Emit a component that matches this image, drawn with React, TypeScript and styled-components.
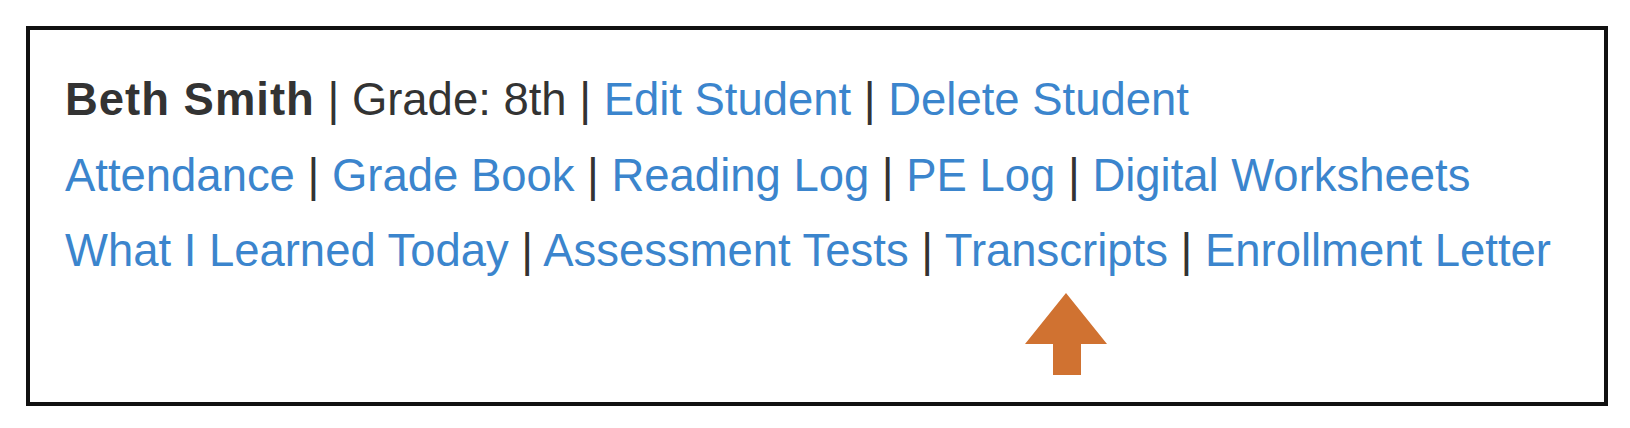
import styled, { createGlobalStyle } from 'styled-components';

const GlobalStyle = createGlobalStyle`
    html, body {
        margin: 0;
        padding: 0;
        background: #ffffff;
    }
`;

const Page = styled.div`
    padding: 26px 22px 22px 26px;
`;

const StudentCard = styled.section`
    position: relative;
    box-sizing: border-box;
    width: 1582px;
    height: 380px;
    border: 4px solid #111111;
    padding: 32px 35px 0 35px;
    font-family: "Liberation Sans", Arial, Helvetica, sans-serif;
    font-size: 45.45px;
    line-height: 75.5px;
    color: #333333;
`;

const Line = styled.div`
    white-space: nowrap;
`;

const Name = styled.strong`
    font-weight: 700;
    letter-spacing: 1px;
    color: #333333;
`;

const Info = styled.span`
    color: #333333;
`;

const NavLink = styled.a`
    color: #3b85cd;
    text-decoration: none;
    cursor: pointer;
`;

const Sep = styled.span`
    color: #333333;
`;

const Pointer = styled.svg`
    position: absolute;
    left: 995px;
    top: 263px;
`;

const rows: string[][] = [
    ['Attendance', 'Grade Book', 'Reading Log', 'PE Log', 'Digital Worksheets'],
    ['What I Learned Today', 'Assessment Tests', 'Transcripts', 'Enrollment Letter'],
];

function LinkRow({ items }: { items: string[] }) {
    return (
        <Line>
            {items.map((label, i) => (
                <span key={label}>
                    {i > 0 && <Sep> | </Sep>}
                    <NavLink>{label}</NavLink>
                </span>
            ))}
        </Line>
    );
}

export default function App() {
    return (
        <>
            <GlobalStyle />
            <Page>
                <StudentCard>
                    <Line>
                        <Name>Beth Smith</Name>
                        <Sep> | </Sep>
                        <Info>Grade: 8th</Info>
                        <Sep> | </Sep>
                        <NavLink>Edit Student</NavLink>
                        <Sep> | </Sep>
                        <NavLink>Delete Student</NavLink>
                    </Line>
                    {rows.map((items) => (
                        <LinkRow key={items[0]} items={items} />
                    ))}
                    <Pointer width="82" height="82" viewBox="0 0 82 82">
                        <polygon
                            points="41,0 82,51 56,51 56,82 28,82 28,51 0,51"
                            fill="#d07231"
                        />
                    </Pointer>
                </StudentCard>
            </Page>
        </>
    );
}
